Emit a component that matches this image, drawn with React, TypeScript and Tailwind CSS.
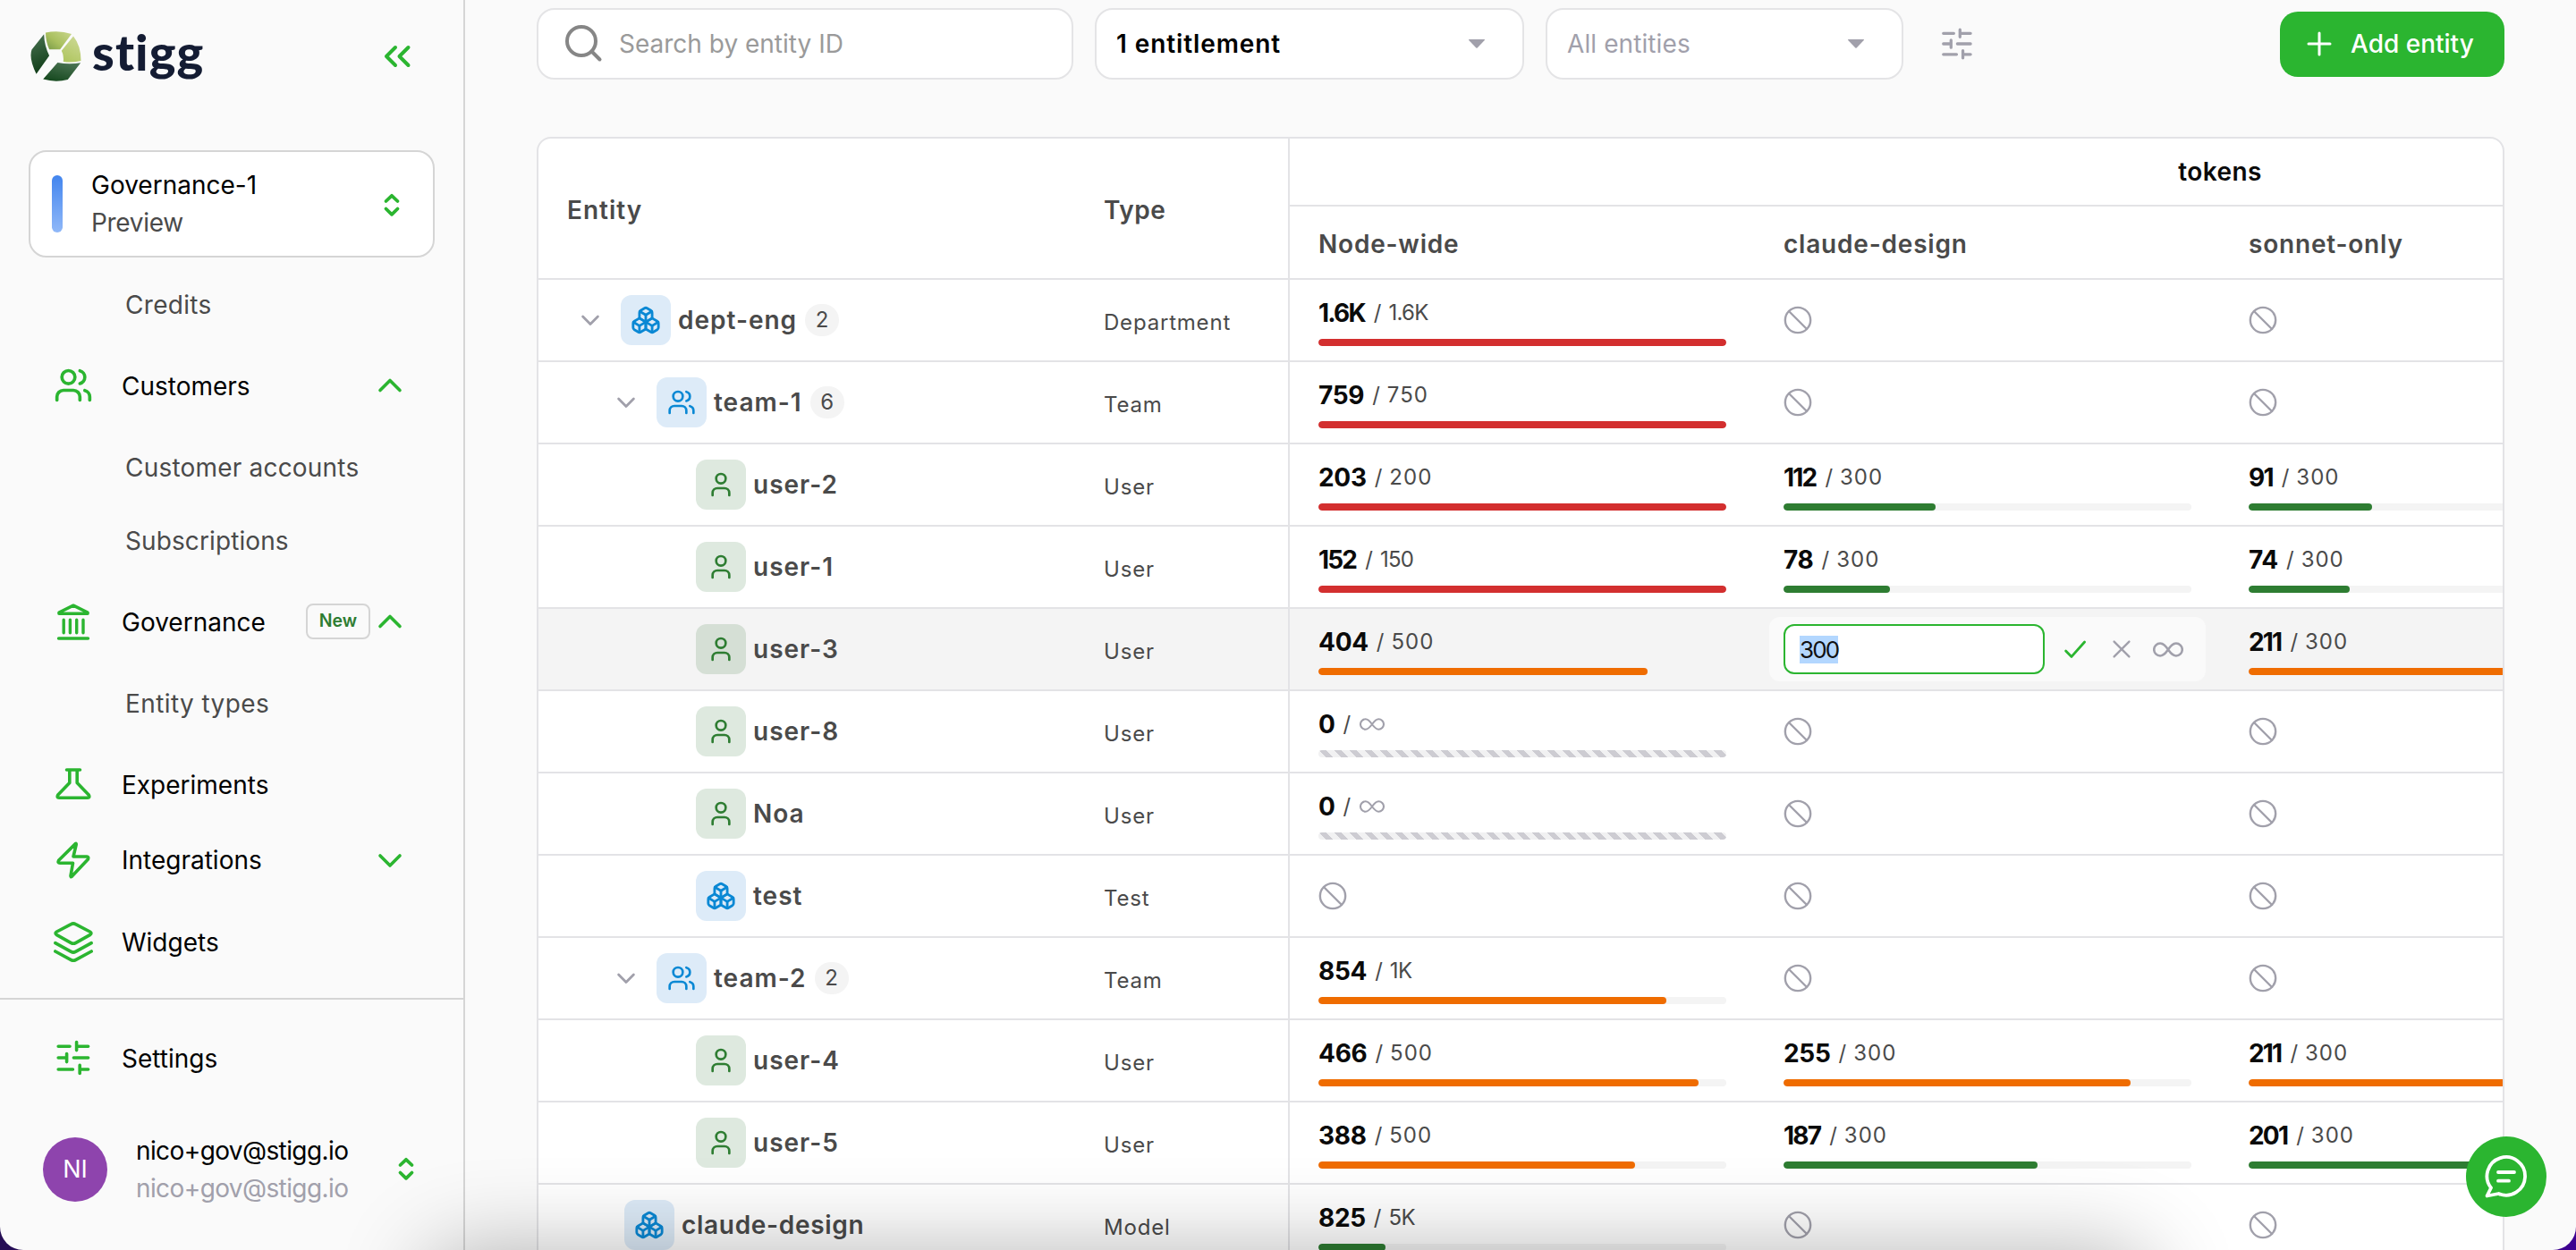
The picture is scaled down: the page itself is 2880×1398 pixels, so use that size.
import type { ReactNode } from "react";
import { Ban, Boxes, User, Users } from "lucide-react";

const GREEN = "#2bb530";
const GRAY = "#a1a0ab";

/* ---------- icons ---------- */

function Logo() {
  return (
    <svg width="57" height="56" viewBox="0 0 57 56">
      <defs>
        <linearGradient id="lgDarkA" x1="0" y1="0" x2="0.2" y2="1">
          <stop offset="0" stopColor="#4a7352" />
          <stop offset="1" stopColor="#123f1a" />
        </linearGradient>
        <linearGradient id="lgTop" x1="1" y1="0" x2="0" y2="0.9">
          <stop offset="0" stopColor="#c9d68c" />
          <stop offset="0.6" stopColor="#a9c05f" />
          <stop offset="1" stopColor="#7d9e4a" />
        </linearGradient>
        <linearGradient id="lgRight" x1="0.8" y1="0" x2="0.4" y2="1">
          <stop offset="0" stopColor="#ccd894" />
          <stop offset="1" stopColor="#b1c763" />
        </linearGradient>
        <linearGradient id="lgDarkB" x1="0.8" y1="0" x2="0.3" y2="1">
          <stop offset="0" stopColor="#4c7454" />
          <stop offset="1" stopColor="#174a20" />
        </linearGradient>
      </defs>
      <path d="M15.2 3.3 L1.5 20.5 Q-2 30 6.6 47.7 L21.1 27.3 Q15.5 16 15.2 3.3Z" fill="url(#lgDarkA)" />
      <path d="M17 1.5 Q32 -1.5 46 3 L33.2 20.3 H21.1 Q17 11 17 1.5Z" fill="url(#lgTop)" />
      <path d="M48 5.5 Q56.5 16 56.5 33 Q46 35.5 36.8 34 Q37.5 27 34.8 21.7Z" fill="url(#lgRight)" />
      <path d="M30.4 35 Q43 37.5 56.2 35.3 L41.8 54 Q28 57.5 14.2 53.5Z" fill="url(#lgDarkB)" />
    </svg>
  );
}

function Line({ w, h, sw = 3.5, color = GREEN, children }: { w: number; h: number; sw?: number; color?: string; children: ReactNode }) {
  return (
    <svg
      className="shrink-0"
      width={w}
      height={h}
      viewBox={`0 0 ${w} ${h}`}
      fill="none"
      stroke={color}
      strokeWidth={sw}
      strokeLinecap="round"
      strokeLinejoin="round"
    >
      {children}
    </svg>
  );
}

const ChevronUp = () => (
  <Line w={40} h={40} sw={3.6}>
    <path d="M9 25.5 L20 14.5 L31 25.5" />
  </Line>
);
const ChevronDown = () => (
  <Line w={40} h={40} sw={3.6}>
    <path d="M9 15 L20 26 L31 15" />
  </Line>
);
const UpDown = () => (
  <Line w={24} h={32} sw={3.8}>
    <path d="M5.5 11 L12 4.8 L18.5 11 M5.5 19.5 L12 25.8 L18.5 19.5" />
  </Line>
);
const BankIcon = () => (
  <Line w={44} h={44} sw={3.6}>
    <path d="M6 13.2 V12 L22 4.2 L38 12 V13.2 Z" />
    <path d="M11.2 20.3 V34.8 M18.4 20.3 V34.8 M25.7 20.3 V34.8 M33 20.3 V34.8" strokeWidth={3.4} />
    <path d="M5.6 41 H38.4" />
  </Line>
);
const FlaskIcon = () => (
  <Line w={44} h={44} sw={3.6}>
    <path d="M14.5 6 H29.5 M17.8 6 V20.5 L4.8 34 Q3 37.2 6 37.2 H38 Q41 37.2 39.2 34 L26.2 20.5 V6" />
  </Line>
);
const BoltIcon = () => (
  <Line w={44} h={44} sw={3.6}>
    <path d="M24.4 3.6 L5.6 22.2 Q4.2 25.2 7 25.2 H21.5 L19 39.6 Q19 41 20 40.4 L38.4 21 Q39.5 18.2 37 18 H22 L25.2 4.6 Q25.4 3 24.4 3.6Z" />
  </Line>
);
const LayersIcon = () => (
  <Line w={46} h={46} sw={3.6}>
    <path d="M20.5 3.6 Q23 2.2 25.5 3.6 L41.5 12 Q44.4 13.8 41.5 15.6 L25.5 24.6 Q23 26 20.5 24.6 L4.5 15.6 Q1.6 13.8 4.5 12Z" />
    <path d="M2.8 24.6 L20.5 34.4 Q23 35.8 25.5 34.4 L43.2 24.6" />
    <path d="M2.8 34 L20.5 43.6 Q23 45 25.5 43.6 L43.2 34" />
  </Line>
);
const SlidersIcon = ({ color = GREEN, size = 44 }: { color?: string; size?: number }) => (
  <svg className="shrink-0" width={size} height={size} viewBox="0 0 44 44" fill="none" stroke={color} strokeWidth={3.6} strokeLinecap="round">
    <path d="M5.2 9.2 H18 M25.6 4.6 V13.6 M25.6 9.2 H38.6" />
    <path d="M5.2 22 H14.6 M14.6 17.6 V26.6 M22.4 22 H38.6" />
    <path d="M5.2 35 H21.4 M29.2 30.4 V39.4 M29.2 35 H38.6" />
  </svg>
);
const InfinityIcon = ({ w = 28 }: { w?: number }) => (
  <svg className="shrink-0" width={w} height={w / 2} viewBox="0 0 28 14" fill="none" stroke={GRAY} strokeWidth={2.1}>
    <path d="M14 7 C11.4 3.4 9.7 1.3 6.7 1.3 a5.7 5.7 0 0 0 0 11.4 C9.7 12.7 11.4 10.6 14 7 C16.6 3.4 18.3 1.3 21.3 1.3 a5.7 5.7 0 0 1 0 11.4 C18.3 12.7 16.6 10.6 14 7Z" />
  </svg>
);
const Caret = () => (
  <svg className="shrink-0" width="20" height="12" viewBox="0 0 20 12" fill={GRAY}>
    <path d="M1.6 1 H18.4 Q19.4 1.2 18.8 2 L10.7 10.4 Q10 11 9.3 10.4 L1.2 2 Q0.6 1.2 1.6 1Z" />
  </svg>
);

/* ---------- sidebar ---------- */

function NavItem({ icon, label, height, right }: { icon: ReactNode; label: ReactNode; height: string; right?: ReactNode }) {
  return (
    <div className={`flex shrink-0 items-center pl-[60px] pr-[62px] ${height}`}>
      <div className="flex w-11 justify-center">{icon}</div>
      <div className="ml-8 flex-1 pt-px text-[28px] text-black">{label}</div>
      {right}
    </div>
  );
}

function SubItem({ children }: { children: ReactNode }) {
  return <div className="flex h-[82px] shrink-0 items-center pt-px pl-[140px] text-[28px] text-[#4a4a4a]">{children}</div>;
}

function Sidebar() {
  return (
    <aside className="flex w-[520px] shrink-0 flex-col border-r-2 border-[#d5d5d5]">
      <div className="flex h-[168px] shrink-0 items-start pt-[35px] pl-[34px]">
        <Logo />
        <span className="ml-[12px] w-[126px] font-['Lato'] text-[56px] leading-[45px] font-black tracking-[1.1px] text-[#141c33]">stigg</span>
        <div className="mt-[12px] ml-[196px]">
          <Line w={40} h={32} sw={4}>
            <path d="M17 6 L7 16 L17 26 M31.5 6 L21.5 16 L31.5 26" />
          </Line>
        </div>
      </div>

      <div className="mx-8 flex h-[120px] shrink-0 items-center rounded-[20px] border-2 border-[#d5d5d5] bg-white pr-[34px] pl-6">
        <div className="h-16 w-3 rounded-full bg-linear-to-b from-[#4285ee] to-[#90b8f8]" />
        <div className="ml-8 flex-1 text-[28px] leading-[42px]">
          <div className="text-black">Governance-1</div>
          <div className="tracking-[-0.3px] text-[#4a4a4a]">Preview</div>
        </div>
        <div className="pt-1">
          <UpDown />
        </div>
      </div>

      <div className="mt-[11px] flex flex-col">
        <SubItem>
          <span className="tracking-[0.3px]">Credits</span>
        </SubItem>
        <NavItem height="h-[100px]" icon={<Users size={44} color={GREEN} strokeWidth={2} className="shrink-0" />} label="Customers" right={<ChevronUp />} />
        <SubItem>
          <span className="tracking-[0.2px]">Customer accounts</span>
        </SubItem>
        <SubItem>
          <span className="tracking-[0.1px]">Subscriptions</span>
        </SubItem>
        <NavItem
          height="h-[100px]"
          icon={<BankIcon />}
          label="Governance"
          right={
            <div className="flex items-center">
              <div className="mr-0.5 flex h-10 w-[72px] items-center justify-center rounded-lg border-2 border-[#d5d5d5] text-[19.5px] font-semibold text-[#2e7d32]">
                New
              </div>
              <ChevronUp />
            </div>
          }
        />
        <SubItem>
          <span className="tracking-[0.4px]">Entity types</span>
        </SubItem>
        <NavItem height="h-[100px]" icon={<FlaskIcon />} label="Experiments" />
        <NavItem height="h-[69px]" icon={<BoltIcon />} label="Integrations" right={<ChevronDown />} />
        <NavItem height="h-[114px]" icon={<LayersIcon />} label="Widgets" />
      </div>

      <div className="mt-1.5 shrink-0 border-t-2 border-[#d5d5d5]">
        <NavItem height="h-[130px]" icon={<SlidersIcon />} label="Settings" />
        <div className="flex h-[120px] items-center pr-[52px] pl-12">
          <div className="flex size-[72px] items-center justify-center rounded-full bg-[#8e44ad] text-[27px] text-white">NI</div>
          <div className="ml-8 flex-1 text-[28px] leading-[42px] tracking-[-0.6px]">
            <div className="text-black">nico+gov@stigg.io</div>
            <div className="text-[#a1a0ab]">nico+gov@stigg.io</div>
          </div>
          <UpDown />
        </div>
      </div>
    </aside>
  );
}

/* ---------- toolbar ---------- */

function Toolbar() {
  return (
    <div className="flex h-20 shrink-0 items-center">
      <div className="flex h-20 w-[600px] items-center rounded-[20px] border-2 border-[#e4e4e6] bg-white pl-[30px]">
        <Line w={42} h={42} sw={4} color="#868686">
          <circle cx="18" cy="18" r="16" />
          <path d="M29.5 29.5 L38.5 38.5" />
        </Line>
        <span className="ml-[18px] text-[28px] text-[#9a9a9a]">Search by entity ID</span>
      </div>
      <div className="ml-6 flex h-20 w-[480px] items-center justify-between rounded-[20px] border-2 border-[#e4e4e6] bg-white pr-[41px] pl-[22px]">
        <span className="text-[28px] font-semibold tracking-[0.9px] text-black">1 entitlement</span>
        <Caret />
      </div>
      <div className="ml-6 flex h-20 w-[400px] items-center justify-between rounded-[20px] border-2 border-[#e4e4e6] bg-white pr-[41px] pl-[22px]">
        <span className="text-[28px] tracking-[0.1px] text-[#a1a0ab]">All entities</span>
        <Caret />
      </div>
      <div className="ml-10">
        <SlidersIcon color={GRAY} size={40} />
      </div>
      <div className="ml-auto flex h-[73px] w-[251px] items-center rounded-[20px] bg-[#2bb530] pl-[29px]">
        <Line w={30} h={30} sw={3} color="#fff">
          <path d="M15 3 V27 M3 15 H27" />
        </Line>
        <span className="ml-5 text-[28px] font-medium text-white">Add entity</span>
      </div>
    </div>
  );
}

/* ---------- table ---------- */

type Tone = "red" | "orange" | "green";
type Cell = { v: string; max: string; pct: number; tone: Tone } | "none" | "unlimited" | "edit";
type Kind = "cubes" | "team" | "user";
type RowData = { name: string; kind: Kind; indent: string; count?: string; type: string; cells: [Cell, Cell, Cell]; hover?: boolean };

const u = (v: string, max: string, pct: number, tone: Tone): Cell => ({ v, max, pct, tone });
const L0 = "pl-[38px]";
const L0_LEAF = "pl-[96px]";
const L1 = "pl-[78px]";
const L2 = "pl-[176px]";

const rows: RowData[] = [
  { name: "dept-eng", kind: "cubes", indent: L0, count: "2", type: "Department", cells: [u("1.6K", "1.6K", 100, "red"), "none", "none"] },
  { name: "team-1", kind: "team", indent: L1, count: "6", type: "Team", cells: [u("759", "750", 100, "red"), "none", "none"] },
  { name: "user-2", kind: "user", indent: L2, type: "User", cells: [u("203", "200", 100, "red"), u("112", "300", 37.3, "green"), u("91", "300", 30.3, "green")] },
  { name: "user-1", kind: "user", indent: L2, type: "User", cells: [u("152", "150", 100, "red"), u("78", "300", 26, "green"), u("74", "300", 24.7, "green")] },
  { name: "user-3", kind: "user", indent: L2, type: "User", hover: true, cells: [u("404", "500", 80.8, "orange"), "edit", u("211", "300", 70.3, "orange")] },
  { name: "user-8", kind: "user", indent: L2, type: "User", cells: ["unlimited", "none", "none"] },
  { name: "Noa", kind: "user", indent: L2, type: "User", cells: ["unlimited", "none", "none"] },
  { name: "test", kind: "cubes", indent: L2, type: "Test", cells: ["none", "none", "none"] },
  { name: "team-2", kind: "team", indent: L1, count: "2", type: "Team", cells: [u("854", "1K", 85.4, "orange"), "none", "none"] },
  { name: "user-4", kind: "user", indent: L2, type: "User", cells: [u("466", "500", 93.2, "orange"), u("255", "300", 85, "orange"), u("211", "300", 70.3, "orange")] },
  { name: "user-5", kind: "user", indent: L2, type: "User", cells: [u("388", "500", 77.6, "orange"), u("187", "300", 62.3, "green"), u("201", "300", 67, "green")] },
  { name: "claude-design", kind: "cubes", indent: L0_LEAF, type: "Model", cells: [u("825", "5K", 16.5, "green"), "none", "none"] },
];

const toneClass: Record<Tone, string> = { red: "bg-[#d32f2f]", orange: "bg-[#ef6c00]", green: "bg-[#2e7d32]" };

function EntityChip({ kind, hover }: { kind: Kind; hover?: boolean }) {
  const bg = kind !== "user" ? "bg-[#ddebf8]" : hover ? "bg-[#d5dfd5]" : "bg-[#dee9df]";
  return (
    <div className={`flex size-14 shrink-0 items-center justify-center rounded-xl ${bg}`}>
      {kind === "cubes" && <Boxes size={34} color="#0a88d4" strokeWidth={2} />}
      {kind === "team" && <Users size={32} color="#0a88d4" strokeWidth={2} />}
      {kind === "user" && <User size={32} color="#2e7d32" strokeWidth={2} />}
    </div>
  );
}

function Amount({ value, limit }: { value: string; limit: ReactNode }) {
  return (
    <div className="flex h-9 items-center text-[24px] text-[#4a4a4a]">
      <span className={`text-[28px] leading-9 font-bold text-[#0a0a0a] ${value.includes("1") ? "tracking-[-1.8px]" : "tracking-[-0.3px]"}`}>{value}</span>
      <span className={`leading-9 ${value.includes("1") ? "ml-[10px]" : "ml-[9px]"}`}>/</span>
      {limit}
    </div>
  );
}

function EditCell() {
  return (
    <div className="flex h-[90px] items-center pl-4">
      <div className="flex h-[72px] w-[488px] items-center rounded-xl bg-[#fafafa] pl-4">
        <div className="flex h-14 w-[292px] items-center rounded-xl border-2 border-[#2bb530] bg-white pl-4">
          <span className="bg-[#b3d7ff] text-[26px] leading-[31px] tracking-[-1.8px] text-[#111]">300</span>
        </div>
        <div className="ml-5 flex items-center">
          <Line w={28} h={28} sw={2.8}>
            <path d="M3.6 16 L10 22.4 L24.6 6" />
          </Line>
          <div className="ml-[25px]">
            <Line w={26} h={28} sw={2.4} color={GRAY}>
              <path d="M4.6 5.6 L21.4 22.4 M21.4 5.6 L4.6 22.4" />
            </Line>
          </div>
          <div className="ml-[22px]">
            <InfinityIcon w={34} />
          </div>
        </div>
      </div>
    </div>
  );
}

function UsageCell({ cell }: { cell: Cell }) {
  if (cell === "edit") return <EditCell />;
  if (cell === "none")
    return (
      <div className="flex h-[90px] items-center pl-[31px]">
        <Ban size={34} color={GRAY} strokeWidth={1.7} />
      </div>
    );
  if (cell === "unlimited")
    return (
      <div className="px-8 pt-[19px]">
        <Amount
          value="0"
          limit={
            <span className="ml-[10px]">
              <InfinityIcon />
            </span>
          }
        />
        <div className="mt-[11px] h-2 rounded bg-[repeating-linear-gradient(45deg,#f1f1f2_0px,#f1f1f2_6px,#cdccd2_6px,#cdccd2_12px)]" />
      </div>
    );
  const narrow = cell.max.includes("K") || cell.max.includes("1");
  return (
    <div className="px-8 pt-[19px]">
      <Amount value={cell.v} limit={<span className={`ml-[8px] leading-9 ${narrow ? "tracking-[-0.7px]" : "tracking-[1px]"}`}>{cell.max}</span>} />
      <div className="mt-[11px] h-2 overflow-hidden rounded bg-[#f4f4f4]">
        <div className={`h-full rounded ${toneClass[cell.tone]}`} style={{ width: `${cell.pct}%` }} />
      </div>
    </div>
  );
}

function Row({ row }: { row: RowData }) {
  return (
    <div className={`flex h-[92px] shrink-0 border-b-2 border-[#e3e3e6] ${row.hover ? "bg-[#f4f4f4]" : ""}`}>
      <div className={`flex w-[600px] shrink-0 items-center ${row.indent}`}>
        {row.count && (
          <div className="mr-3.5">
            <Line w={40} h={40} sw={2.8} color={GRAY}>
              <path d="M11.6 16 L20 24.6 L28.4 16" />
            </Line>
          </div>
        )}
        <EntityChip kind={row.kind} hover={row.hover} />
        <span className={`-mt-px ml-2 text-[28px] font-semibold text-[#4a4a4a] ${row.name === "claude-design" ? "tracking-[0.7px]" : "tracking-[1px]"}`}>
          {row.name}
        </span>
        {row.count && (
          <span className="ml-[9px] flex h-9 w-[38px] items-center justify-center rounded-full bg-[#f4f4f4] text-[24px] text-[#4a4a4a]">{row.count}</span>
        )}
      </div>
      <div className="flex w-[238px] shrink-0 items-center pt-1.5 pl-8 text-[24px] tracking-[0.8px] text-[#4a4a4a]">{row.type}</div>
      <div className="flex w-[2082px] shrink-0 border-l-2 border-[#e3e3e6]">
        {row.cells.map((c, i) => (
          <div key={i} className="w-[520px] shrink-0">
            <UsageCell cell={c} />
          </div>
        ))}
      </div>
    </div>
  );
}

function EntityTable() {
  return (
    <div className="mt-16 flex h-[1300px] w-[2200px] shrink-0 flex-col overflow-hidden rounded-t-2xl border-2 border-[#e3e3e6] bg-white">
      <div className="flex h-[158px] shrink-0 border-b-2 border-[#e3e3e6] text-[28px] font-semibold text-[#4a4a4a]">
        <div className="flex w-[600px] shrink-0 items-center pt-[3px] pl-8 tracking-[1px]">Entity</div>
        <div className="flex w-[238px] shrink-0 items-center pt-[3px] pl-8 tracking-[0.5px]">Type</div>
        <div className="w-[2082px] shrink-0 border-l-2 border-[#e3e3e6]">
          <div className="flex h-[76px] items-center justify-center border-b-2 border-[#e3e3e6] pb-px tracking-[0.4px] text-[#0a0a0a]">tokens</div>
          <div className="flex h-20 pt-[3px] tracking-[0.8px]">
            <div className="flex w-[520px] shrink-0 items-center pl-8">Node-wide</div>
            <div className="flex w-[520px] shrink-0 items-center pl-8">claude-design</div>
            <div className="flex w-[520px] shrink-0 items-center pl-8">sonnet-only</div>
          </div>
        </div>
      </div>
      {rows.map((r) => (
        <Row key={r.name} row={r} />
      ))}
    </div>
  );
}

export default function App() {
  return (
    <div className="h-[1398px] w-[2880px] overflow-hidden bg-linear-to-r from-[#250d55] to-[#3d0090] font-['Inter',sans-serif]">
      <div className="relative flex h-full w-full overflow-hidden rounded-b-[26px] bg-[#fafafa]">
        <Sidebar />
        <main className="flex min-w-0 flex-1 flex-col pt-[9px] pr-20 pl-20">
          <Toolbar />
          <EntityTable />
        </main>

        {/* shade cast by the window below */}
        <div className="pointer-events-none absolute top-[1410px] left-[490px] h-[300px] w-[1900px] rounded-[20px] shadow-[0_0_100px_10px_rgba(0,0,0,0.3)]" />

        <button className="absolute top-[1271px] left-[2757px] size-[90px] rounded-full bg-[#2bb530]">
          <Line w={90} h={90} sw={3.8} color="#fff">
            <path d="M28 57.5 A21.3 21.3 0 1 1 36.5 64 L23.5 66.5 Z" />
            <path d="M36 40 H54 M36 49.7 H48" />
          </Line>
        </button>
      </div>
    </div>
  );
}
